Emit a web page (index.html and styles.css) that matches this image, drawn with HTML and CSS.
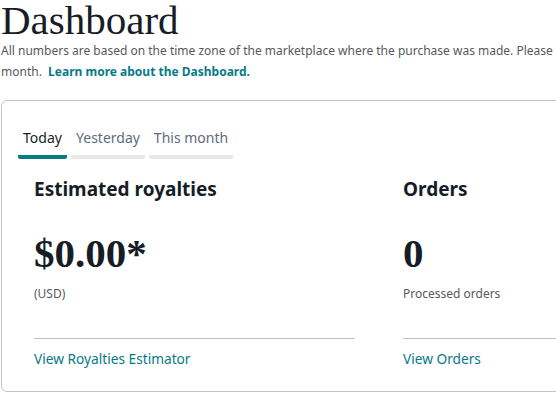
FILE: index.html
```html
<!DOCTYPE html>
<html>
<head>
<meta charset="utf-8">
<link rel="stylesheet" href="styles.css">
</head>
<body>
<div class="page">
  <h1 class="title">Dashboard</h1>
  <div class="intro">
    <div class="intro-line">All numbers are based on the time zone of the marketplace where the purchase was made. Please</div>
    <div class="intro-line">month.&nbsp; <a class="link strong" href="#">Learn more about the Dashboard.</a></div>
  </div>
  <div class="card">
    <div class="tabs">
      <div class="tab tab-today active">Today</div>
      <div class="tab tab-yesterday">Yesterday</div>
      <div class="tab tab-month">This month</div>
    </div>
    <div class="cols">
      <div class="col">
        <h2 class="col-title">Estimated royalties</h2>
        <div class="big">$0.00*</div>
        <div class="sub">(USD)</div>
        <div class="rule"></div>
        <a class="link" href="#">View Royalties Estimator</a>
      </div>
      <div class="col">
        <h2 class="col-title">Orders</h2>
        <div class="big">0</div>
        <div class="sub">Processed orders</div>
        <div class="rule"></div>
        <a class="link" href="#">View Orders</a>
      </div>
    </div>
  </div>
</div>
</body>
</html>
```
FILE: styles.css
```css
html, body {
  margin: 0;
  padding: 0;
  background: #fff;
  overflow: hidden;
}
body {
  font-family: "Noto Sans", "Open Sans", sans-serif;
  color: #0f1111;
}
.page {
  width: 620px;
  padding: 0 0 0 1px;
}
.title {
  font-family: "Liberation Serif", serif;
  font-weight: normal;
  font-size: 41px;
  line-height: 40px;
  margin: 0;
  color: #161d26;
}
.intro {
  font-size: 12px;
  line-height: 21px;
  color: #565959;
}
.intro-line {
  white-space: nowrap;
}
.link {
  color: #077a88;
  text-decoration: none;
  font-size: 13.7px;
}
.intro .link {
  font-size: 12px;
}
.strong {
  font-weight: 700;
}
.card {
  margin-top: 18px;
  border: 1px solid #c4c4c4;
  border-radius: 6px;
  height: 292px;
  box-sizing: border-box;
  padding: 24px 0 0 16px;
}
.tabs {
  display: flex;
  gap: 4px;
}
.tab {
  font-size: 14px;
  line-height: 20px;
  color: #5f6b7a;
  padding: 3px 0 7px;
  text-align: center;
  white-space: nowrap;
  border-bottom: 4px solid #e8e8e8;
  border-radius: 2px;
}
.tab.active {
  color: #161d26;
  border-bottom-color: #067d83;
}
.tab-today { width: 49px; }
.tab-yesterday { width: 74px; }
.tab-month { width: 84px; }
.cols {
  display: flex;
  gap: 48px;
  padding-left: 16px;
  padding-top: 18px;
}
.col {
  width: 321px;
  flex-shrink: 0;
  display: flex;
  flex-direction: column;
}
.col-title {
  margin: 0;
  font-size: 19px;
  line-height: 24px;
  font-weight: 700;
  color: #161d26;
}
.big {
  font-family: "Liberation Serif", serif;
  font-weight: 700;
  font-size: 41px;
  line-height: 40px;
  margin-top: 32px;
  color: #161d26;
}
.sub {
  font-size: 12px;
  line-height: 18px;
  color: #565959;
  margin-top: 12px;
}
.rule {
  height: 1px;
  background: #c0c0c0;
  margin-top: 35px;
  margin-bottom: 10px;
}
```
